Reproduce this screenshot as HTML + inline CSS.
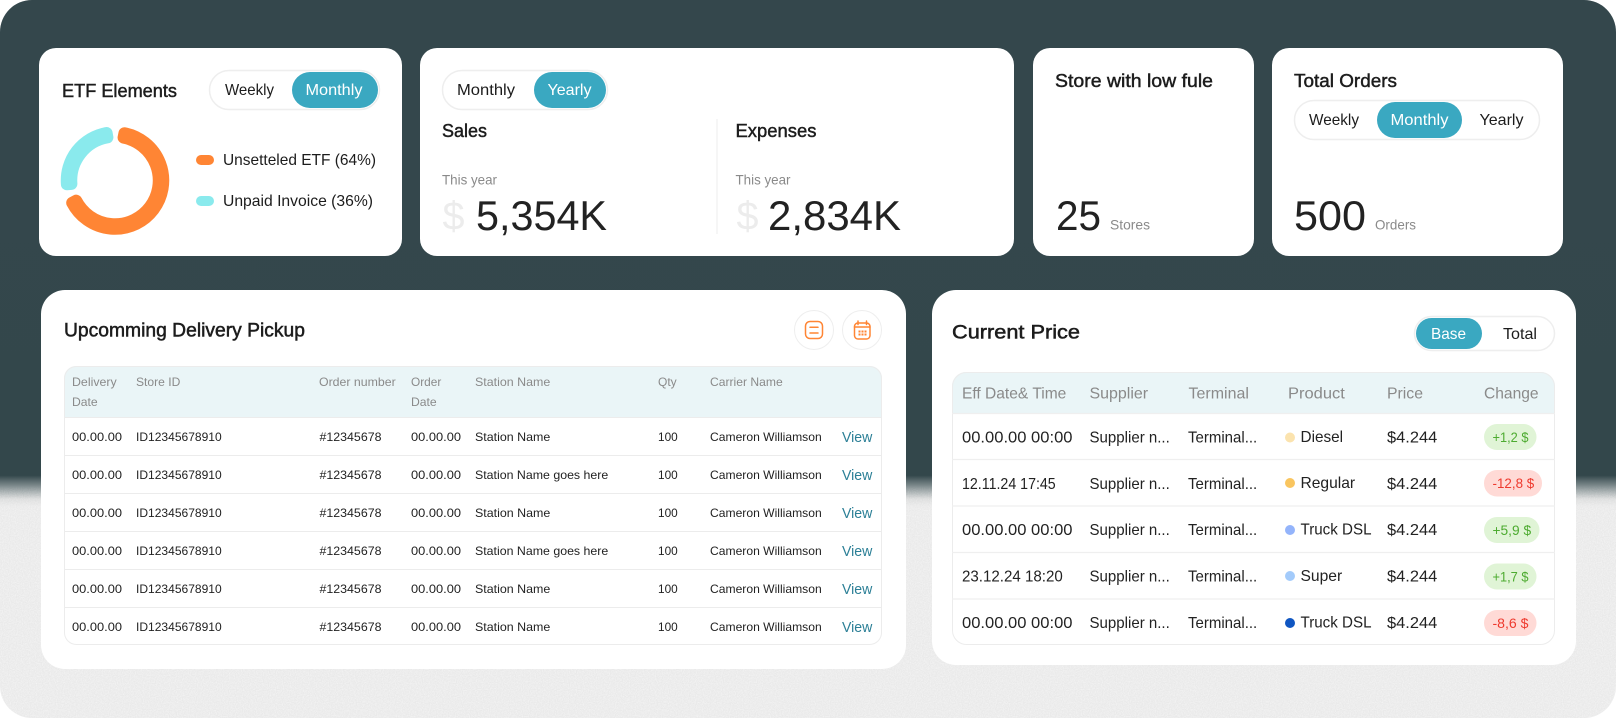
<!DOCTYPE html>
<html><head><meta charset="utf-8"><style>
html,body{margin:0;padding:0;background:#fff;width:1616px;height:718px;overflow:hidden}
svg{display:block}
text{font-family:"Liberation Sans",sans-serif;fill:#1c1c1c;white-space:pre}
.t{font-size:19px;stroke:#1c1c1c;stroke-width:.5px}
.t2{font-size:18px;stroke:#1c1c1c;stroke-width:.45px}
.tg{font-size:16px}
.w{fill:#fff}
.s{font-size:14px;fill:#8a8a8a}
.big{font-size:42px;fill:#222}
.dl{font-size:40px;fill:#ececec}
.h1{font-size:12px;fill:#8a8a8a}
.r1{font-size:12px;fill:#222}
.v{font-size:15px;fill:#2b7f96}
.h2{font-size:16px;fill:#8a8a8a}
.r2{font-size:16px;fill:#222}
.pg{font-size:14px;fill:#4dab30}
.pr{font-size:14px;fill:#ee3a2e}
.card{fill:#fff}
.tog{fill:#fff;stroke:#eeeeee;stroke-width:1.5}
.on{fill:#3aa8c1}
.ic{fill:none;stroke:#ff8534;stroke-width:1.5;stroke-linecap:round;stroke-linejoin:round}
</style></head><body>
<svg width="1616" height="718" viewBox="0 0 1616 718" xmlns="http://www.w3.org/2000/svg">
<defs>
<linearGradient id="bg" x1="0" y1="0" x2="0" y2="718" gradientUnits="userSpaceOnUse">
<stop offset="0" stop-color="#34474c"/>
<stop offset="0.662" stop-color="#33474b"/>
<stop offset="0.680" stop-color="#8f9a9c"/>
<stop offset="0.695" stop-color="#dcdddd"/>
<stop offset="0.705" stop-color="#e9e9e9"/>
<stop offset="1" stop-color="#e9e9e9"/>
</linearGradient>
<linearGradient id="fade" x1="0" y1="485" x2="0" y2="510" gradientUnits="userSpaceOnUse">
<stop offset="0" stop-color="#fff" stop-opacity="0"/>
<stop offset="1" stop-color="#fff" stop-opacity="1"/>
</linearGradient>
<mask id="nm"><rect x="0" y="485" width="1616" height="233" fill="url(#fade)"/></mask>
<filter id="n" x="0" y="0" width="100%" height="100%">
<feTurbulence type="fractalNoise" baseFrequency="0.85" numOctaves="2" seed="4"/>
<feColorMatrix values="0 0 0 0 1  0 0 0 0 1  0 0 0 0 1  0.9 0 0 0 -0.27"/>
</filter>
<clipPath id="outer"><rect x="0" y="0" width="1616" height="718" rx="32"/></clipPath>
<clipPath id="tb1"><rect x="64" y="366" width="818" height="279" rx="12"/></clipPath>
<clipPath id="tb2"><rect x="952" y="372" width="603" height="273" rx="14"/></clipPath>
</defs>
<rect x="0" y="0" width="1616" height="718" rx="32" fill="url(#bg)"/>
<g clip-path="url(#outer)"><g mask="url(#nm)"><rect x="0" y="485" width="1616" height="233" filter="url(#n)"/></g></g>

<!-- ETF card -->
<rect class="card" x="39" y="48" width="363" height="208" rx="17"/>
<text class="t2" x="62" y="97" textLength="115" lengthAdjust="spacingAndGlyphs">ETF Elements</text>
<rect class="tog" x="209.5" y="70.5" width="170" height="39" rx="19.5"/>
<rect class="on" x="292" y="72" width="86" height="36" rx="18"/>
<text class="tg" x="225" y="95" textLength="49" lengthAdjust="spacingAndGlyphs">Weekly</text>
<text class="tg w" x="305.500" y="95" textLength="57" lengthAdjust="spacingAndGlyphs">Monthly</text>
<path d="M124.46 133.2A48.25 48.25 0 1 1 72.2 202.8L76.2 200.7A43.75 43.75 0 1 0 123.57 137.6Z" fill="#ff8534" stroke="#ff8534" stroke-width="12" stroke-linejoin="round"/>
<path d="M66.9 184.3A48.25 48.25 0 0 1 106.6 133L107.4 137.4A43.75 43.75 0 0 0 71.4 183.9Z" fill="#8aeaed" stroke="#8aeaed" stroke-width="12" stroke-linejoin="round"/>
<rect x="196" y="155" width="18" height="10" rx="5" fill="#ff8534"/>
<rect x="196" y="196" width="18" height="10" rx="5" fill="#8aeaed"/>
<text class="tg" x="223" y="165" textLength="153" lengthAdjust="spacingAndGlyphs">Unsetteled ETF (64%)</text>
<text class="tg" x="223" y="206" textLength="150" lengthAdjust="spacingAndGlyphs">Unpaid Invoice (36%)</text>

<!-- Sales card -->
<rect class="card" x="420" y="48" width="594" height="208" rx="17"/>
<rect class="tog" x="442.500" y="70.5" width="165" height="39" rx="19.5"/>
<rect class="on" x="534" y="72" width="72" height="36" rx="18"/>
<text class="tg" x="457" y="95" textLength="58" lengthAdjust="spacingAndGlyphs">Monthly</text>
<text class="tg w" x="547.500" y="95" textLength="44" lengthAdjust="spacingAndGlyphs">Yearly</text>
<text class="t2" x="442" y="137" textLength="45" lengthAdjust="spacingAndGlyphs">Sales</text>
<text class="s" x="442" y="184.500" textLength="55" lengthAdjust="spacingAndGlyphs">This year</text>
<text class="dl" x="442.500" y="229.500" textLength="22" lengthAdjust="spacingAndGlyphs">$</text>
<text class="big" x="476" y="230" textLength="131" lengthAdjust="spacingAndGlyphs">5,354K</text>
<line x1="717" y1="119" x2="717" y2="234" stroke="#eeeeee" stroke-width="1"/>
<text class="t2" x="735.500" y="137" textLength="81" lengthAdjust="spacingAndGlyphs">Expenses</text>
<text class="s" x="735.500" y="184.500" textLength="55" lengthAdjust="spacingAndGlyphs">This year</text>
<text class="dl" x="736.500" y="229.500" textLength="22" lengthAdjust="spacingAndGlyphs">$</text>
<text class="big" x="768" y="230" textLength="133" lengthAdjust="spacingAndGlyphs">2,834K</text>

<!-- Store card -->
<rect class="card" x="1033" y="48" width="221" height="208" rx="17"/>
<text class="t2" x="1055" y="87" textLength="158" lengthAdjust="spacingAndGlyphs">Store with low fule</text>
<text class="big" x="1056" y="230" textLength="45" lengthAdjust="spacingAndGlyphs">25</text>
<text class="s" x="1110" y="229.500" textLength="40" lengthAdjust="spacingAndGlyphs">Stores</text>

<!-- Orders card -->
<rect class="card" x="1272" y="48" width="291" height="208" rx="17"/>
<text class="t2" x="1294" y="87" textLength="103" lengthAdjust="spacingAndGlyphs">Total Orders</text>
<rect class="tog" x="1294.500" y="100.500" width="245" height="39" rx="19.5"/>
<rect class="on" x="1377" y="102" width="85" height="36" rx="18"/>
<text class="tg" x="1309" y="125" textLength="50" lengthAdjust="spacingAndGlyphs">Weekly</text>
<text class="tg w" x="1390.500" y="125" textLength="58" lengthAdjust="spacingAndGlyphs">Monthly</text>
<text class="tg" x="1479.500" y="125" textLength="44" lengthAdjust="spacingAndGlyphs">Yearly</text>
<text class="big" x="1294" y="230" textLength="72" lengthAdjust="spacingAndGlyphs">500</text>
<text class="s" x="1375" y="229.500" textLength="41" lengthAdjust="spacingAndGlyphs">Orders</text>

<!-- Delivery card -->
<rect class="card" x="41" y="290" width="865" height="379" rx="24"/>
<text class="t" x="64" y="336.500" textLength="241" lengthAdjust="spacingAndGlyphs">Upcomming Delivery Pickup</text>
<circle cx="814" cy="330" r="19.500" fill="#fff" stroke="#eeeeee" stroke-width="1"/>
<circle cx="862" cy="330" r="19.500" fill="#fff" stroke="#eeeeee" stroke-width="1"/>
<rect class="ic" x="805.500" y="321.500" width="17" height="17" rx="4.500"/>
<path class="ic" d="M810 327.300H818M810 333H818"/>
<rect class="ic" x="854.500" y="323" width="15.500" height="16" rx="3.500"/>
<path class="ic" d="M858 321V324.500M866.500 321V324.500M854.500 327H870"/>
<path d="M858.500 330.500h2v2h-2zM861.500 330.500h2v2h-2zM864.500 330.500h2v2h-2zM858.500 333.500h2v2h-2zM861.500 333.500h2v2h-2zM864.500 333.500h2v2h-2z" fill="#ff8534"/>

<g clip-path="url(#tb1)">
<rect x="64" y="366" width="818" height="51" fill="#eaf5f7"/>
</g>
<rect x="64.500" y="366.500" width="817" height="278" rx="12" fill="none" stroke="#ececec" stroke-width="1"/>
<path d="M64 417.500H882M64 455.500H882M64 493.500H882M64 531.500H882M64 569.500H882M64 607.500H882" stroke="#ececec" stroke-width="1" fill="none"/>
<text class="h1" x="72" y="386" textLength="44.700" lengthAdjust="spacingAndGlyphs">Delivery</text>
<text class="h1" x="72" y="406" textLength="25.700" lengthAdjust="spacingAndGlyphs">Date</text>
<text class="h1" x="136" y="386" textLength="44.300" lengthAdjust="spacingAndGlyphs">Store ID</text>
<text class="h1" x="319" y="386" textLength="76.700" lengthAdjust="spacingAndGlyphs">Order number</text>
<text class="h1" x="411" y="386" textLength="30.300" lengthAdjust="spacingAndGlyphs">Order</text>
<text class="h1" x="411" y="406" textLength="25.700" lengthAdjust="spacingAndGlyphs">Date</text>
<text class="h1" x="475" y="386" textLength="75.300" lengthAdjust="spacingAndGlyphs">Station Name</text>
<text class="h1" x="658" y="386" textLength="18.700" lengthAdjust="spacingAndGlyphs">Qty</text>
<text class="h1" x="710" y="386" textLength="72.700" lengthAdjust="spacingAndGlyphs">Carrier Name</text>

<g>
<text class="r1" x="72" y="441" textLength="50" lengthAdjust="spacingAndGlyphs">00.00.00</text><text class="r1" x="136" y="441" textLength="85.700" lengthAdjust="spacingAndGlyphs">ID12345678910</text><text class="r1" x="319.500" y="441" textLength="62" lengthAdjust="spacingAndGlyphs">#12345678</text><text class="r1" x="411" y="441" textLength="50" lengthAdjust="spacingAndGlyphs">00.00.00</text><text class="r1" x="475" y="441" textLength="75.300" lengthAdjust="spacingAndGlyphs">Station Name</text><text class="r1" x="658" y="441" textLength="19.700" lengthAdjust="spacingAndGlyphs">100</text><text class="r1" x="710" y="441" textLength="111.700" lengthAdjust="spacingAndGlyphs">Cameron Williamson</text><text class="v" x="842" y="442" textLength="30.300" lengthAdjust="spacingAndGlyphs">View</text>
<text class="r1" x="72" y="479" textLength="50" lengthAdjust="spacingAndGlyphs">00.00.00</text><text class="r1" x="136" y="479" textLength="85.700" lengthAdjust="spacingAndGlyphs">ID12345678910</text><text class="r1" x="319.500" y="479" textLength="62" lengthAdjust="spacingAndGlyphs">#12345678</text><text class="r1" x="411" y="479" textLength="50" lengthAdjust="spacingAndGlyphs">00.00.00</text><text class="r1" x="475" y="479" textLength="133.300" lengthAdjust="spacingAndGlyphs">Station Name goes here</text><text class="r1" x="658" y="479" textLength="19.700" lengthAdjust="spacingAndGlyphs">100</text><text class="r1" x="710" y="479" textLength="111.700" lengthAdjust="spacingAndGlyphs">Cameron Williamson</text><text class="v" x="842" y="480" textLength="30.300" lengthAdjust="spacingAndGlyphs">View</text>
<text class="r1" x="72" y="517" textLength="50" lengthAdjust="spacingAndGlyphs">00.00.00</text><text class="r1" x="136" y="517" textLength="85.700" lengthAdjust="spacingAndGlyphs">ID12345678910</text><text class="r1" x="319.500" y="517" textLength="62" lengthAdjust="spacingAndGlyphs">#12345678</text><text class="r1" x="411" y="517" textLength="50" lengthAdjust="spacingAndGlyphs">00.00.00</text><text class="r1" x="475" y="517" textLength="75.300" lengthAdjust="spacingAndGlyphs">Station Name</text><text class="r1" x="658" y="517" textLength="19.700" lengthAdjust="spacingAndGlyphs">100</text><text class="r1" x="710" y="517" textLength="111.700" lengthAdjust="spacingAndGlyphs">Cameron Williamson</text><text class="v" x="842" y="518" textLength="30.300" lengthAdjust="spacingAndGlyphs">View</text>
<text class="r1" x="72" y="555" textLength="50" lengthAdjust="spacingAndGlyphs">00.00.00</text><text class="r1" x="136" y="555" textLength="85.700" lengthAdjust="spacingAndGlyphs">ID12345678910</text><text class="r1" x="319.500" y="555" textLength="62" lengthAdjust="spacingAndGlyphs">#12345678</text><text class="r1" x="411" y="555" textLength="50" lengthAdjust="spacingAndGlyphs">00.00.00</text><text class="r1" x="475" y="555" textLength="133.300" lengthAdjust="spacingAndGlyphs">Station Name goes here</text><text class="r1" x="658" y="555" textLength="19.700" lengthAdjust="spacingAndGlyphs">100</text><text class="r1" x="710" y="555" textLength="111.700" lengthAdjust="spacingAndGlyphs">Cameron Williamson</text><text class="v" x="842" y="556" textLength="30.300" lengthAdjust="spacingAndGlyphs">View</text>
<text class="r1" x="72" y="593" textLength="50" lengthAdjust="spacingAndGlyphs">00.00.00</text><text class="r1" x="136" y="593" textLength="85.700" lengthAdjust="spacingAndGlyphs">ID12345678910</text><text class="r1" x="319.500" y="593" textLength="62" lengthAdjust="spacingAndGlyphs">#12345678</text><text class="r1" x="411" y="593" textLength="50" lengthAdjust="spacingAndGlyphs">00.00.00</text><text class="r1" x="475" y="593" textLength="75.300" lengthAdjust="spacingAndGlyphs">Station Name</text><text class="r1" x="658" y="593" textLength="19.700" lengthAdjust="spacingAndGlyphs">100</text><text class="r1" x="710" y="593" textLength="111.700" lengthAdjust="spacingAndGlyphs">Cameron Williamson</text><text class="v" x="842" y="594" textLength="30.300" lengthAdjust="spacingAndGlyphs">View</text>
<text class="r1" x="72" y="631" textLength="50" lengthAdjust="spacingAndGlyphs">00.00.00</text><text class="r1" x="136" y="631" textLength="85.700" lengthAdjust="spacingAndGlyphs">ID12345678910</text><text class="r1" x="319.500" y="631" textLength="62" lengthAdjust="spacingAndGlyphs">#12345678</text><text class="r1" x="411" y="631" textLength="50" lengthAdjust="spacingAndGlyphs">00.00.00</text><text class="r1" x="475" y="631" textLength="75.300" lengthAdjust="spacingAndGlyphs">Station Name</text><text class="r1" x="658" y="631" textLength="19.700" lengthAdjust="spacingAndGlyphs">100</text><text class="r1" x="710" y="631" textLength="111.700" lengthAdjust="spacingAndGlyphs">Cameron Williamson</text><text class="v" x="842" y="632" textLength="30.300" lengthAdjust="spacingAndGlyphs">View</text>
</g>

<!-- Price card -->
<rect class="card" x="932" y="290" width="644" height="375" rx="24"/>
<text class="t" x="952" y="338.500" textLength="128" lengthAdjust="spacingAndGlyphs">Current Price</text>
<rect class="tog" x="1414.500" y="316.500" width="140" height="34" rx="17"/>
<rect class="on" x="1416" y="318" width="66" height="31" rx="15.500"/>
<text class="tg w" x="1431" y="339" textLength="35" lengthAdjust="spacingAndGlyphs">Base</text>
<text class="tg" x="1503" y="339" textLength="34" lengthAdjust="spacingAndGlyphs">Total</text>

<g clip-path="url(#tb2)"><rect x="952" y="372" width="603" height="41" fill="#eaf5f7"/></g>
<rect x="952.500" y="372.500" width="602" height="272" rx="14" fill="none" stroke="#ececec" stroke-width="1"/>
<path d="M952 413.500H1555M952 459.500H1555M952 506H1555M952 552.500H1555M952 599H1555" stroke="#efefef" stroke-width="1.200" fill="none"/>
<text class="h2" x="962" y="398.500" textLength="104.300" lengthAdjust="spacingAndGlyphs">Eff Date&amp; Time</text>
<text class="h2" x="1089.500" y="398.500" textLength="58.600" lengthAdjust="spacingAndGlyphs">Supplier</text>
<text class="h2" x="1188.500" y="398.500" textLength="60.400" lengthAdjust="spacingAndGlyphs">Terminal</text>
<text class="h2" x="1288" y="398.500" textLength="56.800" lengthAdjust="spacingAndGlyphs">Product</text>
<text class="h2" x="1387" y="398.500" textLength="36" lengthAdjust="spacingAndGlyphs">Price</text>
<text class="h2" x="1484" y="398.500" textLength="54.600" lengthAdjust="spacingAndGlyphs">Change</text>

<text class="r2" x="962" y="442.500" textLength="110.500" lengthAdjust="spacingAndGlyphs">00.00.00 00:00</text><text class="r2" x="1089.500" y="442.500" textLength="80.300" lengthAdjust="spacingAndGlyphs">Supplier n...</text><text class="r2" x="1188" y="442.500" textLength="69.200" lengthAdjust="spacingAndGlyphs">Terminal...</text><circle cx="1290" cy="437.500" r="5" fill="#fbe3ae"/><text class="r2" x="1300.500" y="442" textLength="42.600" lengthAdjust="spacingAndGlyphs">Diesel</text><text class="r2" x="1387" y="442.500" textLength="50.200" lengthAdjust="spacingAndGlyphs">$4.244</text>
<rect x="1484" y="424" width="52.500" height="26" rx="13" fill="#e0f4d6"/><text class="pg" x="1492.500" y="442" textLength="36" lengthAdjust="spacingAndGlyphs">+1,2 $</text>

<text class="r2" x="962" y="489" textLength="93.700" lengthAdjust="spacingAndGlyphs">12.11.24 17:45</text><text class="r2" x="1089.500" y="489" textLength="80.300" lengthAdjust="spacingAndGlyphs">Supplier n...</text><text class="r2" x="1188" y="489" textLength="69.200" lengthAdjust="spacingAndGlyphs">Terminal...</text><circle cx="1290" cy="483" r="5" fill="#f9c55f"/><text class="r2" x="1300.500" y="488" textLength="54.600" lengthAdjust="spacingAndGlyphs">Regular</text><text class="r2" x="1387" y="489" textLength="50.200" lengthAdjust="spacingAndGlyphs">$4.244</text>
<rect x="1484" y="470" width="58" height="26.500" rx="13" fill="#ffdad6"/><text class="pr" x="1492.500" y="488" textLength="41.700" lengthAdjust="spacingAndGlyphs">-12,8 $</text>

<text class="r2" x="962" y="535" textLength="110.500" lengthAdjust="spacingAndGlyphs">00.00.00 00:00</text><text class="r2" x="1089.500" y="535" textLength="80.300" lengthAdjust="spacingAndGlyphs">Supplier n...</text><text class="r2" x="1188" y="535" textLength="69.200" lengthAdjust="spacingAndGlyphs">Terminal...</text><circle cx="1290" cy="530" r="5" fill="#94b4fb"/><text class="r2" x="1300.500" y="534.500" textLength="71" lengthAdjust="spacingAndGlyphs">Truck DSL</text><text class="r2" x="1387" y="535" textLength="50.200" lengthAdjust="spacingAndGlyphs">$4.244</text>
<rect x="1484" y="517" width="55.500" height="26" rx="13" fill="#e0f4d6"/><text class="pg" x="1492.500" y="535" textLength="38.600" lengthAdjust="spacingAndGlyphs">+5,9 $</text>

<text class="r2" x="962" y="581.500" textLength="100.800" lengthAdjust="spacingAndGlyphs">23.12.24 18:20</text><text class="r2" x="1089.500" y="581.500" textLength="80.300" lengthAdjust="spacingAndGlyphs">Supplier n...</text><text class="r2" x="1188" y="581.500" textLength="69.200" lengthAdjust="spacingAndGlyphs">Terminal...</text><circle cx="1290" cy="576" r="5" fill="#a3cbfb"/><text class="r2" x="1300.500" y="581" textLength="41.700" lengthAdjust="spacingAndGlyphs">Super</text><text class="r2" x="1387" y="581.500" textLength="50.200" lengthAdjust="spacingAndGlyphs">$4.244</text>
<rect x="1484" y="563.500" width="52.500" height="26" rx="13" fill="#e0f4d6"/><text class="pg" x="1492.500" y="581.500" textLength="36" lengthAdjust="spacingAndGlyphs">+1,7 $</text>

<text class="r2" x="962" y="628" textLength="110.500" lengthAdjust="spacingAndGlyphs">00.00.00 00:00</text><text class="r2" x="1089.500" y="628" textLength="80.300" lengthAdjust="spacingAndGlyphs">Supplier n...</text><text class="r2" x="1188" y="628" textLength="69.200" lengthAdjust="spacingAndGlyphs">Terminal...</text><circle cx="1290" cy="623" r="5" fill="#0f56c2"/><text class="r2" x="1300.500" y="627.500" textLength="71" lengthAdjust="spacingAndGlyphs">Truck DSL</text><text class="r2" x="1387" y="628" textLength="50.200" lengthAdjust="spacingAndGlyphs">$4.244</text>
<rect x="1484" y="610" width="52.500" height="26" rx="13" fill="#ffdad6"/><text class="pr" x="1492.500" y="628" textLength="36" lengthAdjust="spacingAndGlyphs">-8,6 $</text>
</svg>
</body></html>
